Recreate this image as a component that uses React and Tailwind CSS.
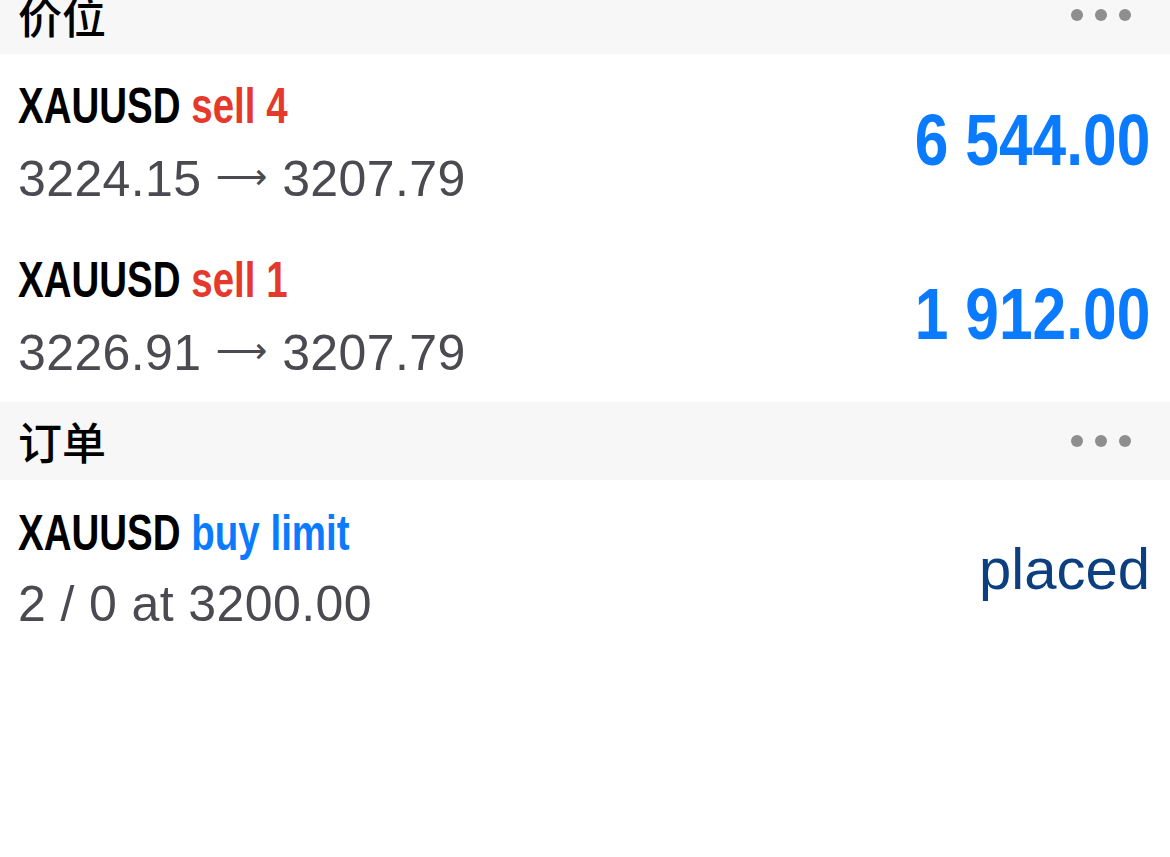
import React from 'react';

const positions = [
    { symbol: 'XAUUSD', side: 'sell 4', from: '3224.15', to: '3207.79', profit: '6 544.00' },
    { symbol: 'XAUUSD', side: 'sell 1', from: '3226.91', to: '3207.79', profit: '1 912.00' },
];

function SectionHeader({ title }) {
    return (
        <div className="h-[78px] bg-[#f7f7f7] flex items-center justify-between pl-[18px] pr-[39px]">
            <span className="text-[44px] leading-none font-medium text-black font-['Noto_Sans_CJK_SC',sans-serif]">{title}</span>
            <div className="flex gap-[12px]">
                <span className="w-[12px] h-[12px] rounded-full bg-[#8e8e8e]" />
                <span className="w-[12px] h-[12px] rounded-full bg-[#8e8e8e]" />
                <span className="w-[12px] h-[12px] rounded-full bg-[#8e8e8e]" />
            </div>
        </div>
    );
}

function Row({ title, titleColor, side, sub, right }) {
    return (
        <div className="h-[174px] flex items-center justify-between pl-[18px] pr-[20px] pt-[3px] bg-white">
            <div className="flex flex-col gap-[15px]">
                <div className="text-[50px] leading-[56px] font-bold whitespace-nowrap origin-left scale-x-[0.77] font-['Liberation_Sans',Arial,sans-serif]">
                    <span className="text-black">{title}</span>{' '}
                    <span className={titleColor}>{side}</span>
                </div>
                <div className="text-[50px] leading-[56px] tracking-[0.4px] text-[#4a4a50] whitespace-nowrap font-['Liberation_Sans',Arial,sans-serif]">{sub}</div>
            </div>
            {right}
        </div>
    );
}

export default function App() {
    return (
        <div className="w-[1170px] h-[857px] overflow-hidden bg-white">
            <div className="-mt-[24px]">
                <SectionHeader title="价位" />
                {positions.map((p, i) => (
                    <Row
                        key={i}
                        title={p.symbol}
                        titleColor="text-[#e5392b]"
                        side={p.side}
                        sub={<>{p.from} <span className="text-[36px] align-[7px] font-['DejaVu_Sans',sans-serif]">⟶</span> {p.to}</>}
                        right={
                            <div className="mb-[6px] text-[72px] leading-none font-bold text-[#0a7bff] whitespace-nowrap origin-right scale-x-[0.84] font-['Liberation_Sans',Arial,sans-serif]">
                                {p.profit}
                            </div>
                        }
                    />
                ))}
                <SectionHeader title="订单" />
                <Row
                    title="XAUUSD"
                    titleColor="text-[#0a7bff]"
                    side="buy limit"
                    sub="2 / 0 at 3200.00"
                    right={
                        <div className="text-[58px] leading-none text-[#0b3f7f] font-['Liberation_Sans',Arial,sans-serif]">placed</div>
                    }
                />
            </div>
        </div>
    );
}
